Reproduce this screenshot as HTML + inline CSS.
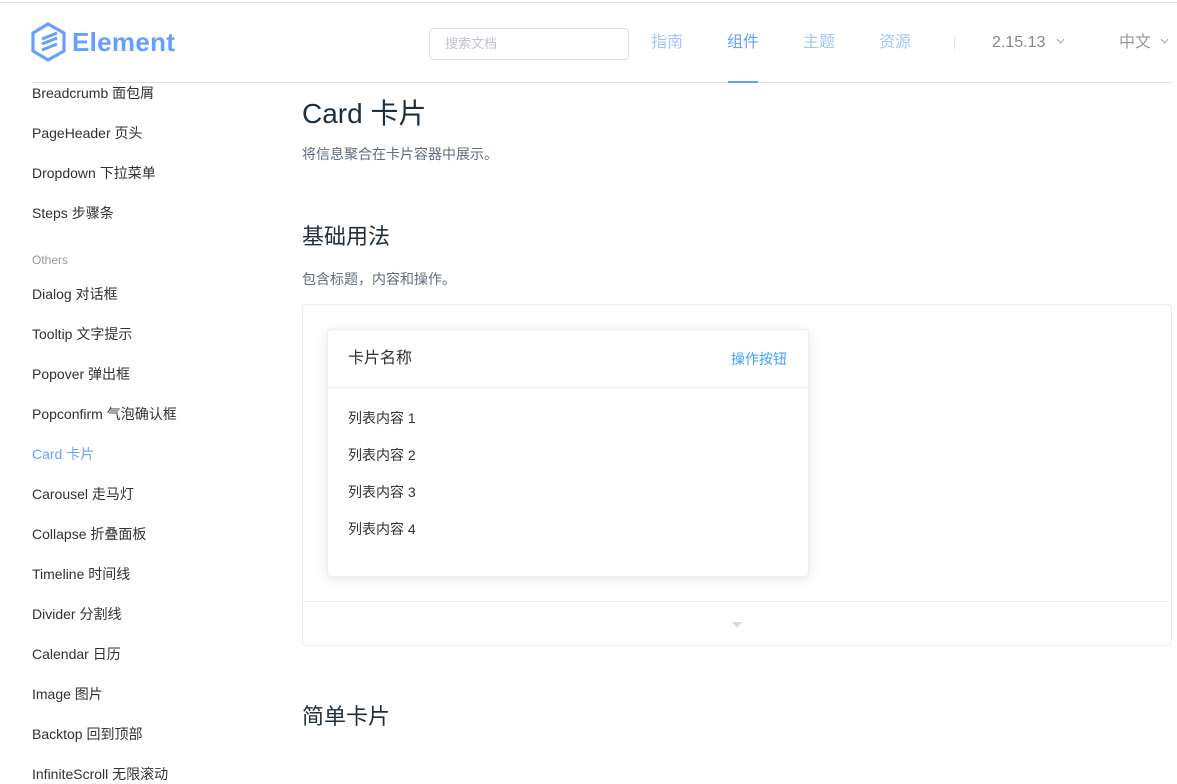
<!DOCTYPE html><html><head><meta charset="utf-8"><style>
*{margin:0;padding:0;box-sizing:border-box}
body{width:1177px;height:783px;overflow:hidden;background:#fff;font-family:"Liberation Sans","Noto Sans CJK SC",sans-serif;position:relative;color:#303133}
.a{position:absolute;white-space:nowrap}
.s{position:absolute;left:32px;font-size:14px;color:#303133;line-height:20px}
</style></head><body>
<div class="a" style="left:0;top:2px;width:1177px;height:1px;background:#dcdfe6"></div>
<svg class="a" style="left:31px;top:22px" width="36" height="40" viewBox="0 0 36 40"><path d="M17 2 L33 11 L33 29 L17 38 L2 29 L2 11 Z" fill="none" stroke="#66a0ff" stroke-width="3.2"/><path d="M11 17 L26 11 M11 22 L26 16 M11 28 L26 22" stroke="#66a0ff" stroke-width="3" fill="none"/></svg>
<div class="a" style="left:72px;top:25px;font-size:26px;font-weight:bold;color:#66a0ff;line-height:34px;letter-spacing:0.3px">Element</div>
<div class="a" style="left:429px;top:28px;width:200px;height:32px;border:1px solid #dcdfe6;border-radius:4px;font-size:13px;color:#c0c4cc;line-height:30px;padding-left:15px">搜索文档</div>
<div class="a" style="left:651px;top:32px;font-size:16px;color:#a3c6ff;line-height:22px">指南</div>
<div class="a" style="left:727px;top:32px;font-size:16px;color:#66a0ff;line-height:22px">组件</div>
<div class="a" style="left:803px;top:32px;font-size:16px;color:#a3c6ff;line-height:22px">主题</div>
<div class="a" style="left:879px;top:32px;font-size:16px;color:#a3c6ff;line-height:22px">资源</div>
<div class="a" style="left:954px;top:35px;width:1px;height:15px;background:#e4e7ed"></div>
<div class="a" style="left:992px;top:32px;font-size:16px;color:#888;line-height:22px">2.15.13</div>
<svg class="a" style="left:1056px;top:38px" width="9" height="6"><path d="M1 1L4.5 5L8 1" stroke="#aaa" fill="none"/></svg>
<div class="a" style="left:1119px;top:32px;font-size:16px;color:#999;line-height:22px">中文</div>
<svg class="a" style="left:1160px;top:38px" width="9" height="6"><path d="M1 1L4.5 5L8 1" stroke="#aaa" fill="none"/></svg>
<div class="a" style="left:32px;top:82px;width:1140px;height:1px;background:#dcdfe6"></div>
<div class="a" style="left:728px;top:81px;width:30px;height:2px;background:#66a0ff"></div>
<div class="s" style="top:83px">Breadcrumb 面包屑</div>
<div class="s" style="top:123px">PageHeader 页头</div>
<div class="s" style="top:163px">Dropdown 下拉菜单</div>
<div class="s" style="top:203px">Steps 步骤条</div>
<div class="s" style="top:252px;font-size:12px;color:#999;line-height:16px">Others</div>
<div class="s" style="top:284px">Dialog 对话框</div>
<div class="s" style="top:324px">Tooltip 文字提示</div>
<div class="s" style="top:364px">Popover 弹出框</div>
<div class="s" style="top:404px">Popconfirm 气泡确认框</div>
<div class="s" style="top:444px;color:#66a0ff">Card 卡片</div>
<div class="s" style="top:484px">Carousel 走马灯</div>
<div class="s" style="top:524px">Collapse 折叠面板</div>
<div class="s" style="top:564px">Timeline 时间线</div>
<div class="s" style="top:604px">Divider 分割线</div>
<div class="s" style="top:644px">Calendar 日历</div>
<div class="s" style="top:684px">Image 图片</div>
<div class="s" style="top:724px">Backtop 回到顶部</div>
<div class="s" style="top:764px">InfiniteScroll 无限滚动</div>
<div class="a" style="left:302px;top:96px;font-size:28px;color:#1f2f3d;line-height:36px">Card 卡片</div>
<div class="a" style="left:302px;top:144px;font-size:14px;color:#5e6d82;line-height:20px">将信息聚合在卡片容器中展示。</div>
<div class="a" style="left:302px;top:223px;font-size:22px;color:#1f2f3d;line-height:28px">基础用法</div>
<div class="a" style="left:302px;top:269px;font-size:14px;color:#5e6d82;line-height:20px">包含标题，内容和操作。</div>
<div class="a" style="left:302px;top:304px;width:870px;height:342px;border:1px solid #ebebeb;border-radius:3px"></div>
<div class="a" style="left:303px;top:601px;width:868px;height:1px;background:#eaeefb"></div>
<div class="a" style="left:732px;top:622px;width:0;height:0;border-left:5px solid transparent;border-right:5px solid transparent;border-top:6px solid #d3dce6"></div>
<div class="a" style="left:327px;top:329px;width:482px;height:248px;border:1px solid #ebeef5;border-radius:4px;box-shadow:0 2px 12px rgba(0,0,0,.1);background:#fff"></div>
<div class="a" style="left:348px;top:348px;font-size:16px;color:#303133;line-height:22px">卡片名称</div>
<div class="a" style="left:731px;top:349px;font-size:14px;color:#409eff;line-height:20px">操作按钮</div>
<div class="a" style="left:328px;top:387px;width:480px;height:1px;background:#ebeef5"></div>
<div class="a" style="left:348px;top:408px;font-size:14px;line-height:20px">列表内容 1</div>
<div class="a" style="left:348px;top:445px;font-size:14px;line-height:20px">列表内容 2</div>
<div class="a" style="left:348px;top:482px;font-size:14px;line-height:20px">列表内容 3</div>
<div class="a" style="left:348px;top:519px;font-size:14px;line-height:20px">列表内容 4</div>
<div class="a" style="left:302px;top:703px;font-size:22px;color:#1f2f3d;line-height:28px">简单卡片</div>
</body></html>
